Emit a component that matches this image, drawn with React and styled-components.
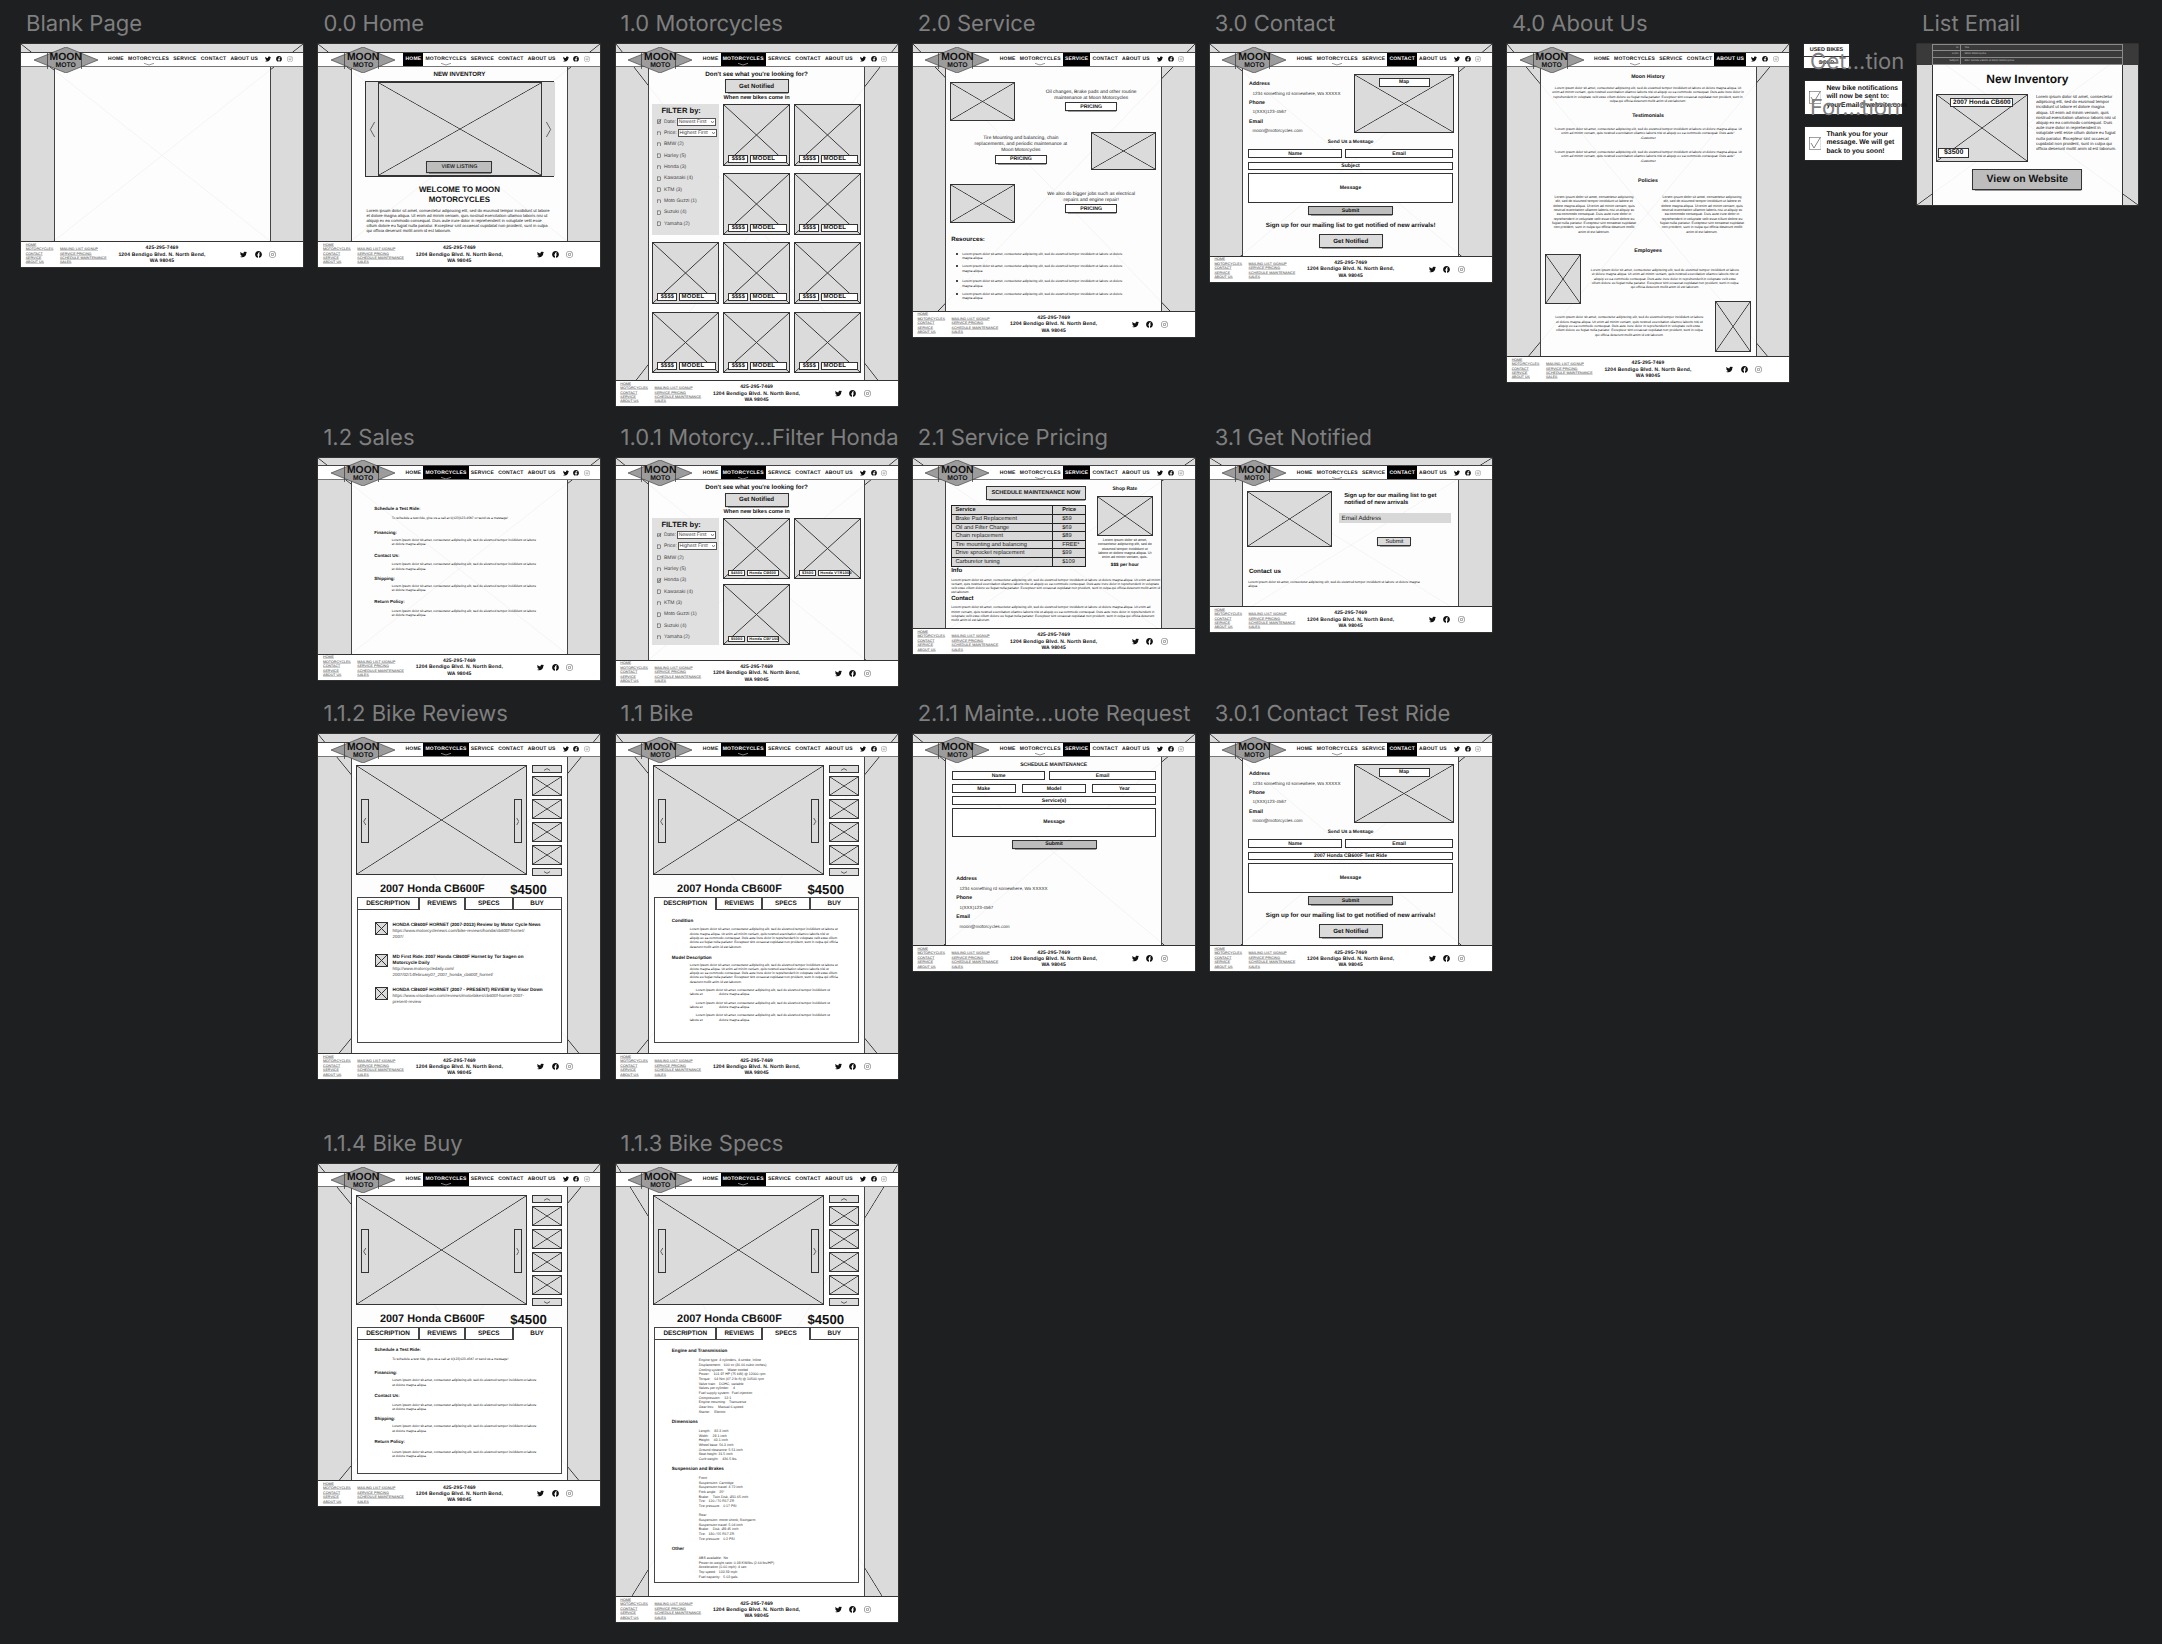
import React from "react";
import styled, { createGlobalStyle } from "styled-components";
import { FaTwitter, FaFacebook, FaInstagram } from "react-icons/fa";

const LOREM =
  "Lorem ipsum dolor sit amet, consectetur adipiscing elit, sed do eiusmod tempor incididunt ut labore et dolore magna aliqua. Ut enim ad minim veniam, quis nostrud exercitation ullamco laboris nisi ut aliquip ex ea commodo consequat. Duis aute irure dolor in reprehenderit in voluptate velit esse cillum dolore eu fugiat nulla pariatur. Excepteur sint occaecat cupidatat non proident, sunt in culpa qui officia deserunt mollit anim id est laborum.";
const LOREM_SHORT =
  "Lorem ipsum dolor sit amet, consectetur adipiscing elit, sed do eiusmod tempor incididunt ut labore et dolore magna aliqua.";
const QUOTE =
  "\"Lorem ipsum dolor sit amet, consectetur adipiscing elit, sed do eiusmod tempor incididunt ut labore et dolore magna aliqua. Ut enim ad minim veniam, quis nostrud exercitation ullamco laboris nisi ut aliquip ex ea commodo consequat. Duis aute\"";

const GlobalStyle = createGlobalStyle`
  * { box-sizing: border-box; }
  html, body {
    margin: 0;
    background: #1e1f21;
    font-family: "Liberation Sans", Arial, sans-serif;
    text-rendering: geometricPrecision;
    overflow: hidden;
  }
`;

const crossLines = (c) =>
  `linear-gradient(to top right, transparent calc(50% - .7px), ${c} 50%, transparent calc(50% + .7px)),
   linear-gradient(to bottom right, transparent calc(50% - .7px), ${c} 50%, transparent calc(50% + .7px))`;

const Canvas = styled.div`
  position: relative;
  width: 2162px;
  height: 1644px;
  overflow: hidden;
`;

const Board = styled.section`
  position: absolute;
  left: ${(p) => p.$x}px;
  top: ${(p) => p.$y - 34}px;
  width: ${(p) => p.$w || 282}px;
`;

const Label = styled.div`
  height: 28px;
  margin-bottom: 6px;
  padding-left: 5px;
  font: 22px/28px Inter, sans-serif;
  color: #7f7f7f;
  white-space: nowrap;
`;

const FloatLabel = styled(Label)`
  position: absolute;
  left: ${(p) => p.$x}px;
  top: ${(p) => p.$y}px;
  padding: 0;
  z-index: 3;
`;

const Sheet = styled.div`
  display: flex;
  flex-direction: column;
  height: ${(p) => p.$h}px;
  background: ${crossLines("#333")}, #dcdbdc;
  box-shadow: 0 0 0 0.5px #444;
`;

const TopStrip = styled.div`
  height: 7.4px;
  flex-shrink: 0;
`;

const Nav = styled.nav`
  position: relative;
  height: 15.3px;
  flex-shrink: 0;
  display: flex;
  align-items: stretch;
  padding-left: 85px;
  background: #fff;
  border-top: 0.7px solid #444;
  border-bottom: 1px solid #777;
`;

const NavLink = styled.span`
  position: relative;
  display: flex;
  align-items: center;
  padding: 0 2.1px;
  font-size: 5px;
  font-weight: bold;
  letter-spacing: 0.2px;
  white-space: nowrap;
  color: ${(p) => (p.$active ? "#fff" : "#111")};
  background: ${(p) => (p.$active ? "#000" : "transparent")};
`;

const NavChevron = styled.svg`
  position: absolute;
  left: 50%;
  bottom: 0.3px;
  width: 10px;
  height: 2.4px;
  margin-left: -5px;
`;

const NavIcons = styled.div`
  display: flex;
  align-items: center;
  gap: 4.7px;
  margin-left: 5px;
  font-size: 6px;
  color: #111;
  svg:last-child {
    color: #888;
  }
`;

const LogoWrap = styled.div`
  position: absolute;
  left: 12.7px;
  top: -6px;
  width: 64px;
  height: 26px;
  display: flex;
  flex-direction: column;
  align-items: center;
  z-index: 2;
  font-weight: bold;
  color: #111;
`;

const LogoShape = styled.svg`
  position: absolute;
  inset: 0;
  width: 100%;
  height: 100%;
`;

const LogoMoon = styled.span`
  position: relative;
  margin-top: 6px;
  font-size: 10.4px;
  line-height: 10.4px;
`;

const LogoMoto = styled.span`
  position: relative;
  font-size: 6.8px;
  line-height: 6px;
`;

const Body = styled.div`
  flex: 1;
  min-height: 0;
  display: flex;
  padding: 0 32.5px;
`;

const Center = styled.main`
  flex: 1;
  min-width: 0;
  display: flex;
  flex-direction: column;
  align-items: ${(p) => p.$align || "flex-start"};
  background: rgba(255, 255, 255, 0.94);
  box-shadow: inset 1px 0 0 #444, inset -1px 0 0 #444;
`;

const FooterBar = styled.footer`
  height: 26px;
  flex-shrink: 0;
  display: grid;
  grid-template-columns: 1fr auto 1fr;
  background: #fff;
  border-top: 1px solid #333;
`;

const FooterLinks = styled.div`
  display: flex;
  gap: 6.5px;
  padding: 0.7px 0 0 4.7px;
  font-size: 3.6px;
  line-height: 4.45px;
  color: #333;
  white-space: nowrap;
`;

const FooterCol = styled.div`
  margin-top: ${(p) => p.$mt || 0}px;
  span {
    display: block;
    text-decoration: underline;
    text-decoration-color: #d0d0d0;
    text-underline-offset: 0.3px;
  }
`;

const FooterInfo = styled.div`
  width: 92px;
  padding-top: 3.4px;
  font-size: 5px;
  font-weight: bold;
  letter-spacing: 0.14px;
  line-height: 6.3px;
  text-align: center;
  color: #111;
`;

const FooterIcons = styled.div`
  display: flex;
  justify-content: flex-end;
  align-items: center;
  gap: 7.5px;
  padding-right: 27px;
  font-size: 7px;
  color: #111;
  svg:last-child {
    color: #666;
  }
`;

const Title = styled.div`
  margin-top: ${(p) => p.$mt || 0}px;
  margin-left: ${(p) => p.$ml || 0}px;
  align-self: ${(p) => p.$self || "auto"};
  font-size: ${(p) => p.$size || 5}px;
  line-height: ${(p) => p.$lh || 6}px;
  font-weight: bold;
  text-align: ${(p) => p.$align || "left"};
  color: #111;
  white-space: nowrap;
`;

const Small = styled.p`
  margin: ${(p) => p.$mt || 0}px 0 0 ${(p) => p.$ml || 0}px;
  width: ${(p) => (p.$w ? `${p.$w}px` : "auto")};
  align-self: ${(p) => p.$self || "auto"};
  flex-shrink: 0;
  font-size: ${(p) => p.$size || 3.35}px;
  line-height: ${(p) => p.$lh || 4.3}px;
  text-align: ${(p) => p.$align || "left"};
  text-indent: ${(p) => p.$indent || 0}px;
  white-space: ${(p) => (p.$pre ? "pre-wrap" : "normal")};
  color: ${(p) => p.$color || "#222"};
`;

const XBox = styled.div`
  position: relative;
  width: ${(p) => p.$w}px;
  height: ${(p) => p.$h}px;
  flex-shrink: 0;
  margin-top: ${(p) => p.$mt || 0}px;
  margin-left: ${(p) => p.$ml || 0}px;
  background: ${crossLines("#333")}, #dcdbdc;
  border: 0.8px solid #333;
`;

const Btn = styled.div`
  display: flex;
  align-items: center;
  justify-content: center;
  flex-shrink: 0;
  align-self: ${(p) => p.$self || "center"};
  width: ${(p) => p.$w}px;
  height: ${(p) => p.$h}px;
  margin-top: ${(p) => p.$mt || 0}px;
  margin-left: ${(p) => p.$ml || 0}px;
  font-size: ${(p) => p.$size || 5.2}px;
  font-weight: ${(p) => p.$weight || "bold"};
  color: #111;
  background: ${(p) => p.$bg || "#fff"};
  border: 0.9px solid #333;
  box-shadow: 0 0.5px 0.8px rgba(0, 0, 0, 0.4);
  white-space: nowrap;
`;

const Field = styled.div`
  display: flex;
  align-items: center;
  justify-content: center;
  flex-shrink: 0;
  width: ${(p) => (p.$w ? `${p.$w}px` : "100%")};
  height: ${(p) => p.$h || 8.7}px;
  margin-top: ${(p) => p.$mt || 0}px;
  font-size: 5.1px;
  font-weight: bold;
  color: #111;
  background: #fff;
  border: 0.9px solid #333;
`;

const FieldRow = styled.div`
  display: flex;
  justify-content: space-between;
  width: 100%;
  margin-top: ${(p) => p.$mt || 0}px;
`;

const Form = styled.div`
  display: flex;
  flex-direction: column;
  width: 204.7px;
  margin-left: ${(p) => p.$ml || 6}px;
`;

/* small drawings */
const ARROWS = {
  left: "8,0 2,5 8,10",
  right: "2,0 8,5 2,10",
  up: "0,8 5,2 10,8",
  down: "0,2 5,8 10,2",
};

const Arrow = ({ dir, w, h }) => (
  <svg width={w} height={h} viewBox="0 0 10 10" preserveAspectRatio="none">
    <polyline
      points={ARROWS[dir]}
      fill="none"
      stroke="#444"
      strokeWidth="0.8"
      vectorEffect="non-scaling-stroke"
    />
  </svg>
);

const Logo = () => (
  <LogoWrap>
    <LogoShape viewBox="0 0 64 26" preserveAspectRatio="none">
      <polygon points="0,13 32,0 64,13 32,26" fill="#9c9c9c" stroke="#333" strokeWidth="0.6" />
      <path d="M13.5 6V22M47.5 6V22" stroke="#333" strokeWidth="0.7" fill="none" />
    </LogoShape>
    <LogoMoon>MOON</LogoMoon>
    <LogoMoto>MOTO</LogoMoto>
  </LogoWrap>
);

const NAV_ITEMS = ["HOME", "MOTORCYCLES", "SERVICE", "CONTACT", "ABOUT US"];
const FOOTER_ONE = ["HOME", "MOTORCYCLES", "CONTACT", "SERVICE", "ABOUT US"];
const FOOTER_TWO = ["MAILING LIST SIGNUP", "SERVICE PRICING", "SCHEDULE MAINTENANCE", "SALES"];

const Frame = ({ x, y, h, label, active, children, align }) => (
  <Board $x={x} $y={y}>
    <Label>{label}</Label>
    <Sheet $h={h}>
      <TopStrip />
      <Nav>
        <Logo />
        {NAV_ITEMS.map((item) => (
          <NavLink key={item} $active={active === item}>
            {item}
            {item === "MOTORCYCLES" && (
              <NavChevron viewBox="0 0 10 2.4" preserveAspectRatio="none">
                <polyline
                  points="0,0.3 5,2 10,0.3"
                  fill="none"
                  stroke={active === item ? "#fff" : "#333"}
                  strokeWidth="0.5"
                />
              </NavChevron>
            )}
          </NavLink>
        ))}
        <NavIcons>
          <FaTwitter />
          <FaFacebook />
          <FaInstagram />
        </NavIcons>
      </Nav>
      <Body>
        <Center $align={align}>{children}</Center>
      </Body>
      <FooterBar>
        <FooterLinks>
          <FooterCol>
            {FOOTER_ONE.map((t) => (
              <span key={t}>{t}</span>
            ))}
          </FooterCol>
          <FooterCol $mt={4.45}>
            {FOOTER_TWO.map((t) => (
              <span key={t}>{t}</span>
            ))}
          </FooterCol>
        </FooterLinks>
        <FooterInfo>
          425-295-7469
          <br />
          1204 Bendigo Blvd. N. North Bend,
          <br />
          WA 98045
        </FooterInfo>
        <FooterIcons>
          <FaTwitter />
          <FaFacebook />
          <FaInstagram />
        </FooterIcons>
      </FooterBar>
    </Sheet>
  </Board>
);

/* home */
const Carousel = styled.div`
  position: relative;
  display: grid;
  grid-template-columns: 12.5px 1fr 12.5px;
  width: 189px;
  height: 95.4px;
  margin-top: 3.1px;
  border: 0.8px solid #333;
`;

const CarouselSide = styled.div`
  display: flex;
  align-items: center;
  justify-content: center;
  background: #dcdbdc;
`;

const ViewListing = styled(Btn)`
  position: absolute;
  left: 50%;
  bottom: 3px;
  margin-left: -33px;
  background: #bdbdbd;
  color: #333;
`;

const HomePage = (p) => (
  <Frame {...p} label="0.0 Home" active="HOME" align="center">
    <Title $mt={4.2} $size={6.2} $lh={7}>NEW INVENTORY</Title>
    <Carousel>
      <CarouselSide><Arrow dir="left" w={7} h={15} /></CarouselSide>
      <XBox $w={164} $h={93.8} />
      <CarouselSide><Arrow dir="right" w={7} h={15} /></CarouselSide>
      <ViewListing $w={66} $h={11.6} $size={5.3}>VIEW LISTING</ViewListing>
    </Carousel>
    <Title $mt={8.3} $size={7.9} $lh={10} $align="center">
      WELCOME TO MOON
      <br />
      MOTORCYCLES
    </Title>
    <Small $mt={3.2} $w={186} $size={4.2} $lh={5}>{LOREM}</Small>
  </Frame>
);

/* motorcycles */
const BikeGrid = styled.div`
  display: grid;
  grid-template-columns: repeat(3, 66.7px);
  grid-auto-rows: 61.3px;
  column-gap: 4.3px;
  row-gap: ${(p) => p.$gap}px;
  margin: ${(p) => p.$mt}px 0 0 4.3px;
  align-self: flex-start;
`;

const FilterPanel = styled.aside`
  grid-row: span 2;
  padding: 2px 0 0 4.7px;
  background: #e0e0e0;
`;

const FilterRow = styled.div`
  display: flex;
  align-items: center;
  gap: 2.4px;
  height: 11.35px;
  font-size: 5px;
  color: #444;
  white-space: nowrap;
`;

const CheckBox = styled.svg`
  width: 4.5px;
  height: 4.5px;
  flex-shrink: 0;
`;

const SelectBox = styled.div`
  display: flex;
  align-items: center;
  justify-content: space-between;
  width: 39.6px;
  height: 8px;
  margin-left: -1.6px;
  padding: 0 1px;
  font-size: 5px;
  background: #fff;
  border: 0.6px solid #555;
`;

const CardLabels = styled.div`
  position: absolute;
  left: 4px;
  bottom: 2px;
  display: flex;
  gap: 2px;
`;

const CardTag = styled.div`
  display: flex;
  align-items: center;
  padding-left: ${(p) => (p.$pad ? 1.2 : 0)}px;
  justify-content: ${(p) => (p.$pad ? "flex-start" : "center")};
  width: ${(p) => p.$w}px;
  height: ${(p) => p.$h}px;
  font-size: ${(p) => p.$size}px;
  font-weight: bold;
  letter-spacing: 0.2px;
  color: #111;
  background: #fff;
  border: 0.8px solid #333;
  white-space: nowrap;
`;

const Check = ({ on }) => (
  <CheckBox viewBox="0 0 10 10">
    <rect x="0.5" y="2" width="7.5" height="7.5" fill="none" stroke="#333" strokeWidth="1.1" />
    {on && <polyline points="2,5 4,8 9,0" fill="none" stroke="#222" strokeWidth="1.1" />}
  </CheckBox>
);

const BikeCard = ({ price = "$$$$", model = "MODEL", small }) => (
  <XBox $w={66.7} $h={61.3}>
    <CardLabels>
      <CardTag $w={small ? 16.7 : 20} $h={small ? 6.3 : 8} $size={small ? 3.8 : 5.6}>{price}</CardTag>
      <CardTag $pad $w={small ? 32.3 : 36.7} $h={small ? 6.3 : 8} $size={small ? 3.8 : 6}>{model}</CardTag>
    </CardLabels>
  </XBox>
);

const BRANDS = ["BMW (2)", "Harley (5)", "Honda (3)", "Kawasaki (4)", "KTM (3)", "Moto Guzzi (1)", "Suzuki (4)", "Yamaha (2)"];

const Filter = ({ honda }) => (
  <FilterPanel>
    <Title $ml={4.3} $size={7.6} $lh={9.6}>FILTER by:</Title>
    <FilterRow>
      <Check on />
      Date:
      <SelectBox>Newest First<Arrow dir="down" w={3} h={2} /></SelectBox>
    </FilterRow>
    <FilterRow>
      <Check />
      Price:
      <SelectBox>Highest First<Arrow dir="down" w={3} h={2} /></SelectBox>
    </FilterRow>
    {BRANDS.map((b) => (
      <FilterRow key={b}>
        <Check on={honda && b.startsWith("Honda")} />
        {b}
      </FilterRow>
    ))}
  </FilterPanel>
);

const BikeIntro = () => (
  <>
    <Title $mt={3.8} $size={6.3} $lh={7}>Don't see what you're looking for?</Title>
    <Btn $mt={1.5} $w={64} $h={14} $bg="#dcdbdc" $size={6.2}>Get Notified</Btn>
    <Title $mt={2} $size={5.6}>When new bikes come in</Title>
  </>
);

const MotorcyclesPage = (p) => (
  <Frame {...p} label="1.0 Motorcycles" active="MOTORCYCLES" align="center">
    <BikeIntro />
    <BikeGrid $mt={3} $gap={7.8}>
      <Filter />
      {Array.from({ length: 10 }, (_, i) => (
        <BikeCard key={i} />
      ))}
    </BikeGrid>
  </Frame>
);

const FilterHondaPage = (p) => (
  <Frame {...p} label="1.0.1 Motorcy...Filter Honda" active="MOTORCYCLES" align="center">
    <BikeIntro />
    <BikeGrid $mt={3} $gap={4.7}>
      <Filter honda />
      <BikeCard small price="$4500" model="Honda CB600" />
      <BikeCard small price="$3500" model="Honda VTR1000" />
      <BikeCard small price="$5000" model="Honda CBF150" />
    </BikeGrid>
  </Frame>
);

/* sales block, also used in the buy tab */
const SalesWrap = styled.div`
  padding: ${(p) => p.$pt}px 0 0 ${(p) => p.$pl}px;
`;

const SALES = [
  ["Schedule a Test Ride:", 0, 4.7, "To schedule a test ride, give us a call at 1(123)123-4567 or send us a message!"],
  ["Financing:", 9.3, 2.9, LOREM_SHORT],
  ["Contact Us:", 6.5, 4.6, LOREM_SHORT],
  ["Shipping:", 4.8, 2.9, LOREM_SHORT],
  ["Return Policy:", 6.5, 5.3, LOREM_SHORT],
];

const SalesInfo = ({ pt, pl }) => (
  <SalesWrap $pt={pt} $pl={pl}>
    {SALES.map(([head, mt, gap, text]) => (
      <div key={head}>
        <Title $mt={mt} $size={4.5} $lh={5}>{head}</Title>
        <Small $mt={gap} $ml={17.6} $w={146} $size={3.3}>{text}</Small>
      </div>
    ))}
  </SalesWrap>
);

const SalesPage = (p) => (
  <Frame {...p} label="1.2 Sales" active="MOTORCYCLES">
    <SalesInfo pt={26.1} pl={23.3} />
  </Frame>
);

/* bike detail */
const Gallery = styled.div`
  display: flex;
  gap: 5px;
  margin: 8.3px 0 0 5px;
`;

const ThumbColumn = styled.div`
  display: flex;
  flex-direction: column;
  justify-content: space-between;
  align-items: center;
  width: 30px;
  height: 111px;
`;

const ThumbArrow = styled.div`
  display: flex;
  align-items: center;
  justify-content: center;
  width: 100%;
  height: 8px;
  background: #dcdbdc;
  border: 0.8px solid #333;
`;

const SlideBtn = styled.div`
  position: absolute;
  top: 33px;
  ${(p) => p.$side}: 4px;
  display: flex;
  align-items: center;
  justify-content: center;
  width: 8.3px;
  height: 43.7px;
  background: #dcdbdc;
  border: 0.8px solid #333;
`;

const BikeHead = styled.div`
  display: flex;
  align-items: center;
  width: 100%;
  height: 15px;
  margin-top: 5.7px;
  padding-left: 29px;
  font-weight: bold;
  color: #111;
`;

const BikeName = styled.span`
  width: 130.3px;
  font-size: 10.9px;
`;

const BikePrice = styled.span`
  font-size: 13.2px;
`;

const Tabs = styled.div`
  display: grid;
  grid-template-columns: 62.3px 45.7px 47.7px 49px;
  width: 204.7px;
  height: 13px;
  margin-left: 6px;
`;

const Tab = styled.div`
  display: flex;
  align-items: center;
  justify-content: center;
  font-size: 6.4px;
  font-weight: bold;
  color: #111;
  background: #fff;
  border: 0.8px solid #444;
  border-bottom: ${(p) => (p.$active ? "0" : "0.8px solid #444")};
`;

const TabPanel = styled.div`
  width: 204.7px;
  height: ${(p) => p.$h}px;
  margin-left: 6px;
  background: #fff;
  border: 0.8px solid #444;
  border-top: 0;
`;

const BikeFrame = ({ tab, panel, children, ...p }) => (
  <Frame {...p} active="MOTORCYCLES">
    <Gallery>
      <XBox $w={171} $h={110}>
        <SlideBtn $side="left"><Arrow dir="left" w={3.5} h={7} /></SlideBtn>
        <SlideBtn $side="right"><Arrow dir="right" w={3.5} h={7} /></SlideBtn>
      </XBox>
      <ThumbColumn>
        <ThumbArrow><Arrow dir="up" w={6} h={3} /></ThumbArrow>
        {[0, 1, 2, 3].map((i) => (
          <XBox key={i} $w={30} $h={20} />
        ))}
        <ThumbArrow><Arrow dir="down" w={6} h={3} /></ThumbArrow>
      </ThumbColumn>
    </Gallery>
    <BikeHead>
      <BikeName>2007 Honda CB600F</BikeName>
      <BikePrice>$4500</BikePrice>
    </BikeHead>
    <Tabs>
      {["DESCRIPTION", "REVIEWS", "SPECS", "BUY"].map((t) => (
        <Tab key={t} $active={t === tab}>{t}</Tab>
      ))}
    </Tabs>
    <TabPanel $h={panel}>{children}</TabPanel>
  </Frame>
);

const PanelHead = ({ mt, children }) => (
  <Title $mt={mt} $ml={16.7} $size={4.6} $lh={5}>{children}</Title>
);

const DETAIL_NOTE = "Lorem ipsum dolor sit amet, consectetur adipiscing elit, sed do eiusmod tempor incididunt ut\nlabore et\t\t\tdolore magna aliqua.";

const BikePage = (p) => (
  <BikeFrame {...p} label="1.1 Bike" tab="DESCRIPTION" panel={132.7}>
    <PanelHead mt={7.8}>Condition</PanelHead>
    <Small $mt={4.7} $ml={34.7} $w={149} $size={3.3}>{LOREM}</Small>
    <PanelHead mt={6.3}>Model Description</PanelHead>
    <Small $mt={2.3} $ml={34.7} $w={149} $size={3.3}>{LOREM}</Small>
    {[3.6, 4.3, 4.3].map((mt, i) => (
      <Small key={i} $pre $mt={mt} $ml={34.7} $w={160} $size={3.3} $indent={6}>{DETAIL_NOTE}</Small>
    ))}
  </BikeFrame>
);

const ReviewRow = styled.div`
  display: flex;
  gap: 5px;
  margin-top: ${(p) => p.$mt}px;
  padding-left: 16.7px;
`;

const ReviewCopy = styled.div`
  width: 153px;
`;

const ReviewHead = styled.div`
  font-size: 4.65px;
  line-height: 5.7px;
  font-weight: bold;
  color: #111;
`;

const REVIEWS = [
  [12.3, "HONDA CB600F HORNET (2007-2013) Review by Motor Cycle News", "https://www.motorcyclenews.com/bike-reviews/honda/cb600f-hornet/\n2007/"],
  [14, "MD First Ride: 2007 Honda CB600F Hornet by Tor Sagen on Motorcycle Daily", "http://www.motorcycledaily.com/\n2007/02/14february07_2007_honda_cb600f_hornet/"],
  [9.9, "HONDA CB600F HORNET (2007 - PRESENT) REVIEW by Visor Down", "https://www.visordown.com/reviews/motorbikes/cb600f-hornet-2007-\npresent-review"],
];

const ReviewsPage = (p) => (
  <BikeFrame {...p} label="1.1.2 Bike Reviews" tab="REVIEWS" panel={132.7}>
    {REVIEWS.map(([mt, head, url]) => (
      <ReviewRow key={head} $mt={mt}>
        <XBox $w={13} $h={13} />
        <ReviewCopy>
          <ReviewHead>{head}</ReviewHead>
          <Small $pre $mt={0.4} $size={4.35} $lh={5.8} $color="#444">{url}</Small>
        </ReviewCopy>
      </ReviewRow>
    ))}
  </BikeFrame>
);

const BuyPage = (p) => (
  <BikeFrame {...p} label="1.1.4 Bike Buy" tab="BUY" panel={133.7}>
    <SalesInfo pt={7.2} pl={16.7} />
  </BikeFrame>
);

const SpecList = styled.div`
  margin: ${(p) => p.$mt}px 0 0 43.7px;
  font-size: 3.5px;
  line-height: 4.67px;
  color: #333;
  white-space: pre;
`;

const SPECS = [
  ["Engine and Transmission", 8.5, 4.8, "Engine type: 4 cylinders, 4-stroke, Inline\nDisplacement:   600 cc (36.66 cubic inches)\nCooling system:    Water cooled\nPower:    101.97 HP (75 kW) @ 12000 rpm\nTorque:    64 Nm (47.2 lb-ft) @ 10500 rpm\nValve train:   DOHC, variable\nValves per cylinder:    4\nFuel supply system:  Fuel injection\nCompression:    12:1\nEngine mounting:   Transverse\nGear box:    Manual 6-speed\nStarter:    Electric"],
  ["Dimensions", 4.5, 5.2, "Length:    82.3 inch\nWidth:    29.1 inch\nHeight:    43.1 inch\nWheel base: 56.3 inch\nGround clearance: 5.51 inch\nSeat height: 31.5 inch\nCurb weight:    436.5 lbs"],
  ["Suspension and Brakes", 4.1, 5.2, "Front\nSuspension: Cartridge\nSuspension travel: 4.72 inch\nFork angle:   25°\nBrake:    Twin Disk, Ø11.65 inch\nTire:   120 / 70 R17 ZR\nTire pressure:   0.17 PSI\n\nRear\nSuspension: mono shock, Swingarm\nSuspension travel: 5.04 inch\nBrake:    Disk, Ø9.45 inch\nTire:   180 / 55 R17 ZR\nTire pressure:   0.2 PSI"],
  ["Other", 4.4, 5.2, "ABS available:  No\nPower-to-weight ratio: 0.38 KW/lbs (2.64 lbs/HP)\nAcceleration (0-60 mph): 4 sec\nTop speed:   133.59 mph\nFuel capacity:   5.02 gals"],
];

const SpecsPage = (p) => (
  <BikeFrame {...p} label="1.1.3 Bike Specs" tab="SPECS" panel={243}>
    {SPECS.map(([head, mt, gap, text]) => (
      <div key={head}>
        <PanelHead mt={mt}>{head}</PanelHead>
        <SpecList $mt={gap}>{text}</SpecList>
      </div>
    ))}
  </BikeFrame>
);

/* service */
const ServiceRow = styled.div`
  display: flex;
  align-items: center;
  height: 38.3px;
  margin-top: ${(p) => p.$mt}px;
  margin-left: ${(p) => p.$ml}px;
`;

const ServiceCopy = styled.div`
  display: flex;
  flex-direction: column;
  align-items: center;
  width: 140px;
  margin-left: ${(p) => p.$ml || 0}px;
  margin-right: ${(p) => p.$mr || 0}px;
  margin-top: -2px;
`;

const BulletList = styled.ul`
  margin: 9px 0 0 11px;
  padding: 0;
  list-style: none;
`;

const Bullet = styled.li`
  position: relative;
  width: 176px;
  margin-top: ${(p) => p.$mt}px;
  padding-left: 6px;
  font-size: 3.35px;
  line-height: 4.5px;
  color: #222;
  &::before {
    content: "";
    position: absolute;
    left: 0;
    top: 1.2px;
    width: 1.8px;
    height: 1.8px;
    border-radius: 50%;
    background: #111;
  }
`;

const Pricing = () => <Btn $mt={0.5} $w={52} $h={9}>PRICING</Btn>;

const ServicePage = (p) => (
  <Frame {...p} label="2.0 Service" active="SERVICE">
    <ServiceRow $mt={15.3} $ml={5.3}>
      <XBox $w={65} $h={38.3} />
      <ServiceCopy $ml={5.7}>
        <Small $size={4.85} $lh={6} $align="center" $w={100}>Oil changes, Brake pads and other routine maintenance at Moon Motorcycles</Small>
        <Pricing />
      </ServiceCopy>
    </ServiceRow>
    <ServiceRow $mt={11.4} $ml={5.7}>
      <ServiceCopy $mr={0.6}>
        <Small $size={4.85} $lh={6} $align="center" $w={100}>Tire Mounting and balancing, chain replacements, and periodic maintenance at Moon Motorcycles</Small>
        <Pricing />
      </ServiceCopy>
      <XBox $w={65} $h={38.3} />
    </ServiceRow>
    <ServiceRow $mt={14} $ml={5.3}>
      <XBox $w={65} $h={38.3} />
      <ServiceCopy $ml={5.7}>
        <Small $size={4.85} $lh={6} $align="center" $w={100}>We also do bigger jobs such as electrical repairs and engine repair!</Small>
        <Pricing />
      </ServiceCopy>
    </ServiceRow>
    <Title $mt={13.2} $ml={6} $size={6.2} $lh={7}>Resources:</Title>
    <BulletList>
      {[0, 3.3, 6, 3.5].map((mt, i) => (
        <Bullet key={i} $mt={mt}>{LOREM_SHORT}</Bullet>
      ))}
    </BulletList>
  </Frame>
);

/* service pricing */
const PricingTop = styled.div`
  display: flex;
  gap: 11px;
  margin-left: 6px;
`;

const PricingLeft = styled.div`
  display: flex;
  flex-direction: column;
`;

const PriceTable = styled.div`
  display: grid;
  grid-template-columns: 99.5px 1fr;
  grid-auto-rows: 1fr;
  width: 134.7px;
  height: 62px;
  margin-top: 4.9px;
  background: #d9d9d9;
  border: 0.9px solid #222;
`;

const PriceCell = styled.div`
  display: flex;
  align-items: center;
  padding-left: ${(p) => (p.$price ? 9.5 : 3.2)}px;
  font-size: 5.7px;
  font-weight: ${(p) => (p.$head ? "bold" : "normal")};
  color: #222;
  border-top: ${(p) => (p.$head ? "0" : "0.7px solid #222")};
  border-left: ${(p) => (p.$price ? "0.9px solid #222" : "0")};
  white-space: nowrap;
`;

const ShopRate = styled.div`
  display: flex;
  flex-direction: column;
  align-items: center;
  width: 56px;
  padding-top: 5.6px;
`;

const PRICES = [
  ["Brake Pad Replacement", "$59"],
  ["Oil and Filter Change", "$69"],
  ["Chain replacement", "$89"],
  ["Tire mounting and balancing", "FREE*"],
  ["Drive sprocket replacement", "$99"],
  ["Carburetor tuning", "$109"],
];

const PricingPage = (p) => (
  <Frame {...p} label="2.1 Service Pricing" active="SERVICE">
    <PricingTop>
      <PricingLeft>
        <Btn $self="flex-end" $mt={5.7} $w={100} $h={13.7} $bg="#dcdbdc" $size={5.6}>SCHEDULE MAINTENANCE NOW</Btn>
        <PriceTable>
          <PriceCell $head>Service</PriceCell>
          <PriceCell $head $price>Price</PriceCell>
          {PRICES.map(([name, price]) => (
            <React.Fragment key={name}>
              <PriceCell>{name}</PriceCell>
              <PriceCell $price>{price}</PriceCell>
            </React.Fragment>
          ))}
        </PriceTable>
      </PricingLeft>
      <ShopRate>
        <Title $size={5}>Shop Rate</Title>
        <XBox $w={56} $h={40} $mt={4} />
        <Small $mt={2.2} $size={3.6} $align="center" $w={54}>{LOREM_SHORT} Ut enim ad minim veniam, quis.</Small>
        <Title $mt={2.8} $size={4.7} $lh={5}>$$$ per hour</Title>
      </ShopRate>
    </PricingTop>
    <Title $mt={0.5} $ml={6} $size={6} $lh={7}>Info</Title>
    <Small $mt={2.6} $ml={6} $w={211} $size={3.35}>{LOREM}</Small>
    <Title $mt={1.1} $ml={6} $size={6} $lh={7}>Contact</Title>
    <Small $mt={2.6} $ml={6} $w={206} $size={3.35}>{LOREM}</Small>
  </Frame>
);

/* maintenance form */
const ContactInfoBlock = styled.div`
  display: flex;
  flex-direction: column;
  margin-left: ${(p) => p.$ml}px;
  width: ${(p) => (p.$w ? `${p.$w}px` : "auto")};
`;

const InfoLabel = styled.div`
  margin-top: ${(p) => p.$mt}px;
  font-size: 5.2px;
  line-height: 6px;
  font-weight: bold;
  color: #111;
`;

const InfoValue = styled.div`
  margin: ${(p) => p.$mt}px 0 0 3.3px;
  font-size: 4.55px;
  line-height: 5px;
  color: #333;
  white-space: nowrap;
`;

const ContactInfo = ({ ml, w, first }) => (
  <ContactInfoBlock $ml={ml} $w={w}>
    <InfoLabel $mt={first}>Address</InfoLabel>
    <InfoValue $mt={4.1}>1234 something rd somewhere, Wa XXXXX</InfoValue>
    <InfoLabel $mt={4.2}>Phone</InfoLabel>
    <InfoValue $mt={3.2}>1(XXX)123-4567</InfoValue>
    <InfoLabel $mt={4.8}>Email</InfoLabel>
    <InfoValue $mt={3.5}>moon@motorcycles.com</InfoValue>
  </ContactInfoBlock>
);

const MaintenancePage = (p) => (
  <Frame {...p} label="2.1.1 Mainte...uote Request" active="SERVICE">
    <Title $mt={4.6} $self="center" $size={5.1}>SCHEDULE MAINTENANCE</Title>
    <Form $ml={6.5}>
      <FieldRow $mt={3.7}>
        <Field $w={93.8}>Name</Field>
        <Field $w={107.6}>Email</Field>
      </FieldRow>
      <FieldRow $mt={4.3}>
        <Field $w={64}>Make</Field>
        <Field $w={64.3}>Model</Field>
        <Field $w={64}>Year</Field>
      </FieldRow>
      <Field $mt={3.3}>Service(s)</Field>
      <Field $mt={2.6} $h={29.4}>Message</Field>
      <Btn $mt={3} $w={85} $h={9} $bg="#bdbdbd">Submit</Btn>
    </Form>
    <ContactInfo ml={11} first={27.3} />
  </Frame>
);

/* contact */
const ContactTop = styled.div`
  display: flex;
  margin-top: 7px;
`;

const MapLabel = styled(Btn)`
  position: absolute;
  top: 2.6px;
  left: 24px;
  box-shadow: none;
`;

const ContactPage = ({ subject = "Subject", label, ...p }) => (
  <Frame {...p} label={label} active="CONTACT">
    <ContactTop>
      <ContactInfo ml={6.9} w={104.5} first={6.7} />
      <XBox $w={100.7} $h={58.7}>
        <MapLabel $w={51} $h={9.3} $size={5}>Map</MapLabel>
      </XBox>
    </ContactTop>
    <Title $mt={6.3} $self="center" $size={4.9}>Send Us a Message</Title>
    <Form>
      <FieldRow $mt={3.7}>
        <Field $w={93.8}>Name</Field>
        <Field $w={107.6}>Email</Field>
      </FieldRow>
      <Field $mt={3.4}>{subject}</Field>
      <Field $mt={3} $h={29.4}>Message</Field>
      <Btn $mt={3.6} $w={85} $h={9} $bg="#bdbdbd">Submit</Btn>
    </Form>
    <Title $mt={6.5} $self="center" $size={6.25} $lh={7}>Sign up for our mailing list to get notified of new arrivals!</Title>
    <Btn $mt={5.5} $w={64} $h={13.7} $bg="#dcdbdc" $size={6.2}>Get Notified</Btn>
  </Frame>
);

/* about */
const PolicyColumns = styled.div`
  display: flex;
  justify-content: space-between;
  width: 192px;
  margin-top: 11.5px;
`;

const EmployeeRow = styled.div`
  display: flex;
  align-items: center;
  justify-content: space-between;
  align-self: stretch;
  margin: ${(p) => p.$mt || 0}px ${(p) => p.$mr}px 0 ${(p) => p.$ml}px;
`;

const AboutPage = (p) => (
  <Frame {...p} label="4.0 About Us" active="ABOUT US" align="center">
    <Title $mt={6.7} $size={5.25}>Moon History</Title>
    <Small $mt={6.5} $w={192} $align="center" $lh={4.2}>{LOREM}</Small>
    <Title $mt={9.7} $size={5.25}>Testimonials</Title>
    <Small $mt={8.5} $w={192} $align="center" $lh={4.2}>{QUOTE}<br />-Customer</Small>
    <Small $mt={10.4} $w={192} $align="center" $lh={4.2}>{QUOTE}<br />-Customer</Small>
    <Title $mt={14.9} $size={5.25}>Policies</Title>
    <PolicyColumns>
      <Small $w={84} $size={3.5} $align="center">{LOREM}</Small>
      <Small $w={84} $size={3.5} $align="center">{LOREM}</Small>
    </PolicyColumns>
    <Title $mt={13.7} $size={5.25}>Employees</Title>
    <EmployeeRow $ml={5.7} $mr={17}>
      <XBox $w={35.6} $h={50.7} />
      <Small $w={149} $size={3.4} $align="center">{LOREM}</Small>
    </EmployeeRow>
    <EmployeeRow $ml={15.3} $mr={5.7} $mt={-3.4}>
      <Small $w={149} $size={3.4} $align="center">{LOREM}</Small>
      <XBox $w={36} $h={50.7} />
    </EmployeeRow>
  </Frame>
);

/* get notified */
const NotifyTop = styled.div`
  display: flex;
  gap: 6.7px;
  margin: 11px 0 0 5px;
`;

const NotifyForm = styled.div`
  display: flex;
  flex-direction: column;
`;

const EmailInput = styled.div`
  display: flex;
  align-items: center;
  width: 111.7px;
  height: 9.3px;
  margin-top: 6.1px;
  padding-left: 2.7px;
  font-size: 6.2px;
  color: #222;
  background: #d8d8d8;
`;

const GetNotifiedPage = (p) => (
  <Frame {...p} label="3.1 Get Notified" active="CONTACT">
    <NotifyTop>
      <XBox $w={85} $h={55.3} />
      <NotifyForm>
        <Title $mt={1.3} $ml={5.3} $size={5.9} $lh={7.3}>
          Sign up for our mailing list to get
          <br />
          notified of new arrivals
        </Title>
        <EmailInput>Email Address</EmailInput>
        <Btn $self="flex-start" $mt={14.7} $ml={38.6} $w={34} $h={9} $size={5.8} $weight="normal" $bg="#dcdbdc">Submit</Btn>
      </NotifyForm>
    </NotifyTop>
    <Title $mt={21.2} $ml={6.7} $size={6.2} $lh={7}>Contact us</Title>
    <Small $mt={5.3} $ml={6} $w={172}>{LOREM_SHORT}</Small>
  </Frame>
);

/* list email */
const MailHeader = styled.div`
  height: 20.7px;
  flex-shrink: 0;
  padding: 0 14.7px;
  background: #3a3a3a;
`;

const MailRow = styled.div`
  display: grid;
  grid-template-columns: 28.7px 1fr;
  height: 6.9px;
  font-size: 2.7px;
  line-height: 6.5px;
  color: #c4c4c4;
  border: 0.5px solid #8a8a8a;
  border-top-width: ${(p) => (p.$first ? 0.5 : 0)}px;
  span:first-child {
    text-align: right;
    padding-right: 1.4px;
    border-right: 0.5px solid #8a8a8a;
  }
  span:last-child {
    padding-left: 3px;
  }
`;

const MailBody = styled.div`
  flex: 1;
  display: flex;
  flex-direction: column;
  margin: 0 14.7px;
  background: rgba(255, 255, 255, 0.94);
  box-shadow: inset 1px 0 0 #333, inset -1px 0 0 #333;
`;

const MailRowTop = styled.div`
  display: flex;
  gap: 8px;
  margin: 8.3px 0 0 4.3px;
`;

const MailCopy = styled(Small)`
  height: 67px;
  overflow: hidden;
`;

const MailTag = styled.div`
  position: absolute;
  left: ${(p) => p.$x}px;
  ${(p) => (p.$bottom ? "bottom: 2.5px" : "top: 2.5px")};
  display: flex;
  align-items: center;
  padding: 0 ${(p) => p.$pad}px;
  height: ${(p) => p.$h}px;
  font-size: ${(p) => p.$size}px;
  font-weight: bold;
  white-space: nowrap;
  color: #111;
  background: #fff;
  border: 0.8px solid #333;
`;

const ListEmail = ({ x, y }) => (
  <Board $x={x} $y={y} $w={220.7}>
    <Label>List Email</Label>
    <Sheet $h={161}>
      <MailHeader>
        <MailRow $first><span>To:</span><span>You</span></MailRow>
        <MailRow><span>From:</span><span>Moon Motorcycles</span></MailRow>
        <MailRow><span>Subject:</span><span>2007 Honda CB600 at Moon Motorcycles!</span></MailRow>
      </MailHeader>
      <MailBody>
        <Title $mt={7} $self="center" $size={12} $lh={14}>New Inventory</Title>
        <MailRowTop>
          <XBox $w={92} $h={67.3}>
            <MailTag $x={13.5} $h={9.3} $size={6.4} $pad={1.6}>2007 Honda CB600</MailTag>
            <MailTag $x={1.5} $bottom $h={10.3} $size={7} $pad={4.4}>$3500</MailTag>
          </XBox>
          <MailCopy $w={82} $size={4.3} $lh={5.2} $mt={-0.3}>{LOREM}</MailCopy>
        </MailRowTop>
        <Btn $mt={7.7} $w={110} $h={20.7} $bg="#bdbdbd" $size={10.4}>View on Website</Btn>
      </MailBody>
    </Sheet>
  </Board>
);

/* little notification pieces */
const Widget = styled.div`
  position: absolute;
  left: ${(p) => p.$x}px;
  top: ${(p) => p.$y}px;
  width: ${(p) => p.$w}px;
  height: ${(p) => p.$h}px;
  background: #fff;
  box-shadow: 0 0 0 0.5px #333;
`;

const UsedRow = styled.div`
  display: flex;
  align-items: center;
  justify-content: center;
  height: 12px;
  font-size: 5.5px;
  font-weight: bold;
  color: #111;
  & + & {
    border-top: 0.6px solid #333;
  }
`;

const NoticeInner = styled.div`
  display: flex;
  align-items: center;
  height: 100%;
  gap: 5px;
  padding-left: 4px;
  font-size: 6.8px;
  line-height: 8.5px;
  font-weight: bold;
  color: #111;
  white-space: nowrap;
`;

const Tick = styled.svg`
  flex-shrink: 0;
  width: 12.4px;
  height: 12.6px;
`;

const TickBox = () => (
  <Tick viewBox="0 0 12.4 12.6">
    <rect x="0.3" y="0.3" width="11.8" height="12" fill="#fff" stroke="#444" strokeWidth="0.5" />
    <polyline points="2,6 5,11 11,1" fill="none" stroke="#333" strokeWidth="0.6" />
  </Tick>
);

const Notice = ({ y, lines }) => (
  <Widget $x={1805} $y={y} $w={96.7} $h={33.3}>
    <NoticeInner>
      <TickBox />
      <div>
        {lines.map((l) => (
          <div key={l}>{l}</div>
        ))}
      </div>
    </NoticeInner>
  </Widget>
);

const COLS = [21, 318.4, 615.6, 912.7, 1209.7, 1507];
const ROWS = [44.3, 457.7, 734.3, 1164.3];

export default function App() {
  return (
    <Canvas>
      <GlobalStyle />
      <Frame x={COLS[0]} y={ROWS[0]} h={222.7} label="Blank Page" />
      <HomePage x={COLS[1]} y={ROWS[0]} h={222.7} />
      <MotorcyclesPage x={COLS[2]} y={ROWS[0]} h={361.7} />
      <ServicePage x={COLS[3]} y={ROWS[0]} h={292.4} />
      <ContactPage x={COLS[4]} y={ROWS[0]} h={237.4} label="3.0 Contact" />
      <AboutPage x={COLS[5]} y={ROWS[0]} h={337.7} />
      <Widget $x={1804.3} $y={44.3} $w={44.4} $h={24}>
        <UsedRow>USED BIKES</UsedRow>
        <UsedRow>SOLD</UsedRow>
      </Widget>
      <Notice y={81} lines={["New bike notifications", "will now be sent to:", "yourEmail@website.com"]} />
      <Notice y={127} lines={["Thank you for your", "message. We will get", "back to you soon!"]} />
      <FloatLabel $x={1810} $y={48}>Get...tion</FloatLabel>
      <FloatLabel $x={1810} $y={94}>For...tion</FloatLabel>
      <ListEmail x={1917} y={ROWS[0]} />

      <SalesPage x={COLS[1]} y={ROWS[1]} h={222} />
      <FilterHondaPage x={COLS[2]} y={ROWS[1]} h={228} />
      <PricingPage x={COLS[3]} y={ROWS[1]} h={196.4} />
      <GetNotifiedPage x={COLS[4]} y={ROWS[1]} h={174.3} />

      <ReviewsPage x={COLS[1]} y={ROWS[2]} h={345} />
      <BikePage x={COLS[2]} y={ROWS[2]} h={345} />
      <MaintenancePage x={COLS[3]} y={ROWS[2]} h={237} />
      <ContactPage x={COLS[4]} y={ROWS[2]} h={237} label="3.0.1 Contact Test Ride" subject="2007 Honda CB600F Test Ride" />

      <BuyPage x={COLS[1]} y={ROWS[3]} h={342} />
      <SpecsPage x={COLS[2]} y={ROWS[3]} h={458} />
    </Canvas>
  );
}
